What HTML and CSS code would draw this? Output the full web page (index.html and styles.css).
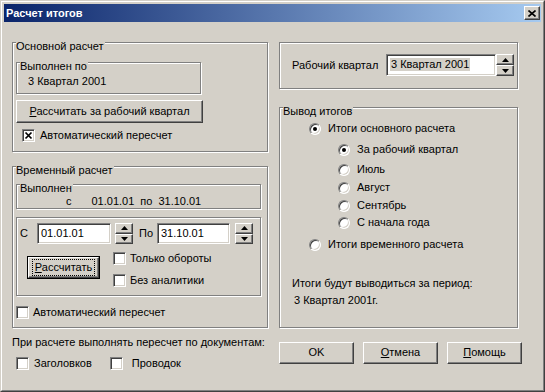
FILE: index.html
```html
<!DOCTYPE html>
<html lang="ru">
<head>
<meta charset="UTF-8">
<title>Расчет итогов</title>
<link rel="stylesheet" href="styles.css">
</head>
<body>
<div class="window">
<div class="frame">

<div class="titlebar">
<span class="title">Расчет итогов</span>
<span class="close raised">
<svg width="8" height="7" viewBox="0 0 8 7"><path d="M0.5 0.5L7.5 6.5M7.5 0.5L0.5 6.5" stroke="#000" stroke-width="1.6"/></svg>
</span>
</div>

<div class="body">

<div class="col col-left">
<div class="group g-main">
<span class="legend">Основной расчет</span>
<div class="group g-done1">
<span class="legend">Выполнен по</span>
<div class="done-value">3 Квартал 2001</div>
</div>
<div class="btn raised btn-wide"><span><u>Р</u>ассчитать за рабочий квартал</span></div>
<label class="check check-auto1">
<span class="cb field"><svg width="9" height="9" viewBox="0 0 9 9"><path d="M1.5 1.5L7.5 7.5M7.5 1.5L1.5 7.5" stroke="#000" stroke-width="1.7"/></svg></span>
Автоматический пересчет
</label>
</div>

<div class="group g-temp">
<span class="legend">Временный расчет</span>
<div class="group g-done2">
<span class="legend">Выполнен</span>
<div class="period">
<span class="p-c">с</span>
<span class="p-from">01.01.01</span>
<span class="p-po">по</span>
<span class="p-to">31.10.01</span>
</div>
</div>
<div class="group g-panel">
<div class="dates">
<span class="lbl-from">С</span>
<span class="edit field ed-from">01.01.01</span>
<span class="spin spin-from">
<span class="raised"><svg width="7" height="4" viewBox="0 0 7 4"><path d="M3.5 0L7 4H0z"/></svg></span>
<span class="raised"><svg width="7" height="4" viewBox="0 0 7 4"><path d="M0 0h7L3.5 4z"/></svg></span>
</span>
<span class="lbl-to">По</span>
<span class="edit field ed-to">31.10.01</span>
<span class="spin spin-to">
<span class="raised"><svg width="7" height="4" viewBox="0 0 7 4"><path d="M3.5 0L7 4H0z"/></svg></span>
<span class="raised"><svg width="7" height="4" viewBox="0 0 7 4"><path d="M0 0h7L3.5 4z"/></svg></span>
</span>
</div>
<div class="calc-row">
<div class="btn-default">
<div class="btn raised btn-calc"><span class="focus"><u>Р</u>ассчитать</span></div>
</div>
<div class="calc-checks">
<label class="check"><span class="cb field"></span>Только обороты</label>
<label class="check"><span class="cb field"></span>Без аналитики</label>
</div>
</div>
</div>
<label class="check check-auto2"><span class="cb field"></span>Автоматический пересчет</label>
</div>

<div class="note">При расчете выполнять пересчет по документам:</div>
<div class="doc-checks">
<label class="check"><span class="cb field"></span>Заголовков</label>
<label class="check check-wires"><span class="cb field"></span>Проводок</label>
</div>
</div>

<div class="col col-right">
<div class="group g-quarter">
<div class="quarter-row">
<span class="lbl-quarter">Рабочий квартал</span>
<span class="edit field ed-quarter"><span class="sel">3 Квартал 2001</span></span>
<span class="spin spin-quarter">
<span class="raised"><svg width="7" height="4" viewBox="0 0 7 4"><path d="M3.5 0L7 4H0z"/></svg></span>
<span class="raised"><svg width="7" height="4" viewBox="0 0 7 4"><path d="M0 0h7L3.5 4z"/></svg></span>
</span>
</div>
</div>

<div class="group g-output">
<span class="legend">Вывод итогов</span>
<label class="radio r-main"><span class="rb field on"></span>Итоги основного расчета</label>
<label class="radio sub r-s1"><span class="rb field on"></span>За рабочий квартал</label>
<label class="radio sub r-s2"><span class="rb field"></span>Июль</label>
<label class="radio sub r-s3"><span class="rb field"></span>Август</label>
<label class="radio sub r-s4"><span class="rb field"></span>Сентябрь</label>
<label class="radio sub r-s5"><span class="rb field"></span>С начала года</label>
<label class="radio r-temp"><span class="rb field"></span>Итоги временного расчета</label>
<div class="info">Итоги будут выводиться за период:</div>
<div class="info-value">3 Квартал 2001г.</div>
</div>

<div class="buttons">
<div class="btn raised btn-dlg">OK</div>
<div class="btn raised btn-dlg"><span><u>О</u>тмена</span></div>
<div class="btn raised btn-dlg"><span><u>П</u>омощь</span></div>
</div>
</div>

</div>
</div>
</div>
</body>
</html>
```

FILE: styles.css
```css
body {
margin: 0;
background: #d4d0c8;
font-family: 'Liberation Sans', Arial, sans-serif;
font-size: 11px;
line-height: 13px;
color: #000;
}
.window {
width: 545px;
height: 392px;
box-sizing: border-box;
border: 1px solid;
border-color: #d4d0c8 #404040 #404040 #d4d0c8;
}
.frame {
height: 100%;
box-sizing: border-box;
border: 1px solid;
border-color: #fff #808080 #808080 #fff;
padding: 2px;
}
.titlebar {
height: 18px;
display: flex;
align-items: center;
justify-content: space-between;
padding: 0 1px 0 2px;
background: linear-gradient(to right, #0a246a, #a6caf0);
}
.title {
color: #fff;
font-weight: bold;
font-size: 11px;
}
.close {
width: 16px;
height: 14px;
box-sizing: border-box;
display: flex;
align-items: center;
justify-content: center;
}

/* 3d borders */
.raised {
background: #d4d0c8;
border: 1px solid;
border-color: #fff #404040 #404040 #fff;
box-shadow: inset -1px -1px #808080;
}
.field {
background: #fff;
box-sizing: border-box;
border: 1px solid;
border-color: #808080 #fff #fff #808080;
box-shadow: inset 1px 1px #404040, inset -1px -1px #d4d0c8;
}
.group {
position: relative;
box-sizing: border-box;
border: 1px solid #808080;
box-shadow: 1px 1px 0 #fff, inset 1px 1px 0 #fff;
}
.legend {
position: absolute;
top: -3px;
left: 3px;
background: #d4d0c8;
padding-right: 1px;
}

.body {
display: flex;
gap: 11px;
padding: 20px 0 0 8px;
}
.col {
display: flex;
flex-direction: column;
}
.col-left {
width: 256px;
}
.col-right {
width: 245px;
}

/* buttons */
.btn {
box-sizing: border-box;
display: flex;
align-items: center;
justify-content: center;
padding-bottom: 1px;
}
.btn-wide {
width: 187px;
height: 23px;
margin: 6px 0 0 3px;
}
.btn-default {
width: 73px;
height: 23px;
box-sizing: border-box;
border: 1px solid #000;
margin: 12px 0 0 10px;
}
.btn-calc {
height: 100%;
}
.focus {
outline: 1px dotted #000;
outline-offset: 1px;
padding: 0 1px;
}
.btn-dlg {
width: 75px;
height: 22px;
}
.buttons {
display: flex;
gap: 9px;
margin-top: 14px;
}

/* checks and radios */
.check,
.radio {
display: flex;
align-items: center;
gap: 5px;
height: 13px;
}
.cb {
width: 13px;
height: 13px;
display: flex;
align-items: center;
justify-content: center;
flex: none;
}
.rb {
width: 12px;
height: 12px;
border-radius: 50%;
display: flex;
align-items: center;
justify-content: center;
flex: none;
}
.rb.on::after {
content: "";
width: 4px;
height: 4px;
border-radius: 50%;
background: #000;
}
.radio {
gap: 7px;
margin-left: 29px;
}
.radio.sub {
margin-left: 58px;
}

/* main group */
.g-main {
height: 110px;
}
.g-done1 {
width: 185px;
height: 32px;
margin: 19px 0 0 3px;
}
.done-value {
padding: 12px 0 0 11px;
}
.check-auto1 {
margin: 6px 0 0 9px;
}

/* temp group */
.g-temp {
height: 162px;
margin-top: 14px;
}
.g-done2 {
width: 245px;
height: 25px;
margin: 17px 0 0 3px;
}
.period {
display: flex;
padding: 10px 0 0 49px;
}
.p-from {
margin-left: 20px;
}
.p-po {
margin-left: 6px;
}
.p-to {
margin-left: 6px;
}
.g-panel {
width: 245px;
height: 79px;
margin: 8px 0 0 3px;
}
.dates {
display: flex;
align-items: center;
height: 21px;
margin-top: 5px;
}
.lbl-from {
width: 17px;
margin-left: 3px;
}
.edit {
height: 100%;
display: flex;
align-items: center;
padding: 0 0 1px 3px;
}
.ed-from {
width: 74px;
}
.ed-to {
width: 73px;
}
.spin {
display: flex;
flex-direction: column;
width: 18px;
height: 100%;
}
.spin > span {
flex: 1;
box-sizing: border-box;
display: flex;
align-items: center;
justify-content: center;
}
.spin-from {
margin-left: 4px;
}
.lbl-to {
width: 18px;
margin-left: 6px;
}
.spin-to {
margin-left: 5px;
}
.calc-row {
display: flex;
align-items: flex-start;
}
.calc-checks {
display: flex;
flex-direction: column;
gap: 9px;
margin: 8px 0 0 13px;
}
.calc-checks .check {
gap: 4px;
}
.check-auto2 {
margin: 10px 0 0 3px;
gap: 4px;
}
.note {
margin-top: 8px;
}
.doc-checks {
display: flex;
margin: 8px 0 0 4px;
}
.check-wires {
margin-left: 18px;
gap: 9px;
}

/* right column */
.g-quarter {
width: 239px;
height: 47px;
}
.quarter-row {
display: flex;
align-items: center;
height: 22px;
margin: 11px 0 0 12px;
}
.lbl-quarter {
width: 94px;
}
.ed-quarter {
width: 110px;
}
.sel {
background: #d4d0c8;
padding: 0 1px;
}
.g-output {
width: 239px;
height: 221px;
margin-top: 18px;
}
.r-main {
margin-top: 14px;
}
.r-s1 {
margin-top: 8px;
}
.r-s2 {
margin-top: 7px;
}
.r-s3,
.r-s4 {
margin-top: 5px;
}
.r-s5 {
margin-top: 4px;
}
.r-temp {
margin-top: 9px;
}
.info {
margin: 26px 0 0 12px;
}
.info-value {
margin: 4px 0 0 14px;
}
```
